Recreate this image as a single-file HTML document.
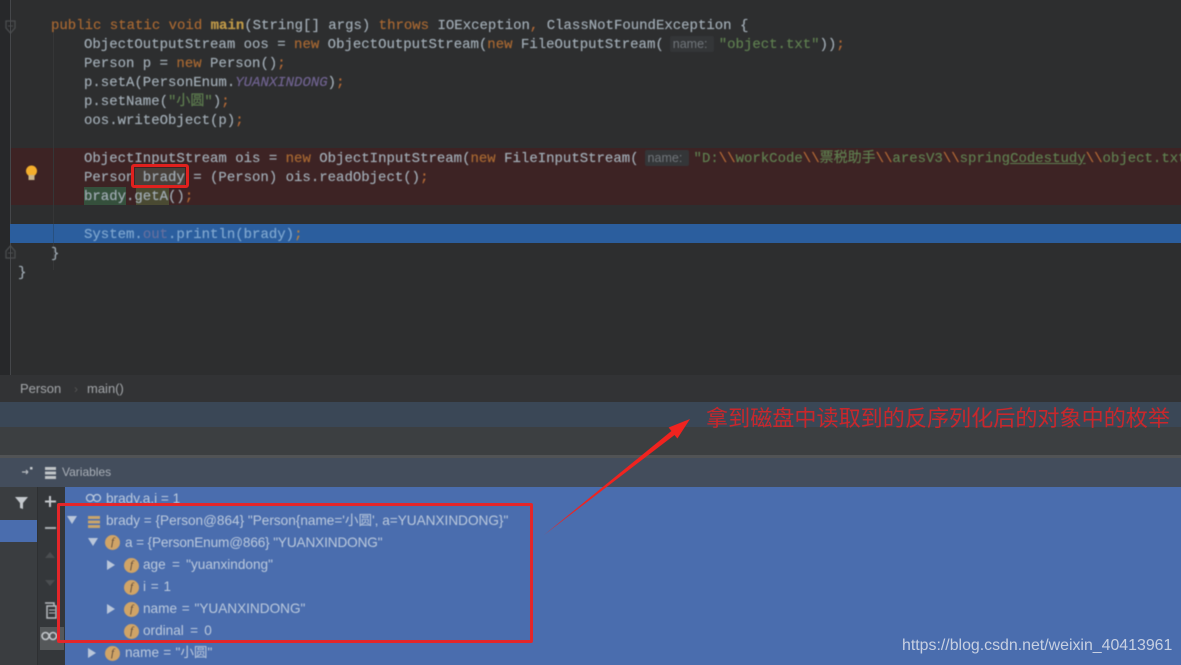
<!DOCTYPE html>
<html><head><meta charset="utf-8">
<style>
html,body{margin:0;padding:0;background:#2d2e2f}
#r{position:relative;width:1181px;height:665px;overflow:hidden;background:#2d2e2f}
.b{position:absolute}
.c{position:absolute;left:0;white-space:pre;font:14px/19px "Liberation Mono","Noto Sans CJK SC",monospace;color:#a0abb4;filter:blur(.6px);-webkit-text-stroke:.2px}
.k{color:#a86832}.s{color:#5f7f50}.y{color:#b46a37}.h{color:#6f628f}
.n{display:inline-block;width:44px;margin:0 5px 0 6px;box-sizing:border-box;color:#70757a;background:#343638;font:12.500px/16px "Liberation Sans",sans-serif;padding:0 3px;border-radius:2px;-webkit-text-stroke:0}
.t{position:absolute;white-space:pre;font:13.600px/20px "Liberation Sans","Noto Sans CJK SC",sans-serif;color:#bccadd;filter:blur(.55px)}
.f{position:absolute;width:15px;height:15px;border-radius:50%;background:#d0a467;color:#59483a;font:italic 11px/15px "Liberation Serif",serif;text-align:center;filter:blur(.4px)}
</style></head><body><div id="r">
<div class="b" style="left:0;top:0;width:10px;height:375px;background:#27282a"></div>
<div class="b" style="left:10px;top:0;width:1px;height:375px;background:#45474a"></div>
<div class="b" style="left:11px;top:148px;width:1170px;height:57px;background:#3d2324"></div>
<div class="b" style="left:10px;top:224px;width:1171px;height:19px;background:#2b5e9e"></div>
<div class="b" style="left:53px;top:30px;width:1px;height:240px;background:#353637"></div>
<div class="b" style="left:53px;top:224px;width:1px;height:19px;background:#28507f"></div>
<div class="b" style="left:84px;top:187px;width:42px;height:18px;background:#35503c"></div>
<div class="b" style="left:136px;top:187px;width:33px;height:18px;background:#4a4a32"></div>
<div class="b" style="left:135px;top:168px;width:50px;height:18px;background:#47403a"></div>

<div class="c" style="top:17px"><span style="padding-left:51px"></span><span class="k">public static void </span><b style="color:#c09a48;font-weight:bold">main</b>(String[] args) <span class="k">throws</span> IOException<span class="y">,</span> ClassNotFoundException {</div>
<div class="c" style="top:36px"><span style="padding-left:84px"></span>ObjectOutputStream oos = <span class="k">new</span> ObjectOutputStream(<span class="k">new</span> FileOutputStream(<span class="n">name:</span><span class="s">"object.txt"</span>))<span class="y">;</span></div>
<div class="c" style="top:55px"><span style="padding-left:84px"></span>Person p = <span class="k">new</span> Person()<span class="y">;</span></div>
<div class="c" style="top:74px"><span style="padding-left:84px"></span>p.setA(PersonEnum.<i class="h">YUANXINDONG</i>)<span class="y">;</span></div>
<div class="c" style="top:93px"><span style="padding-left:84px"></span>p.setName(<span class="s">"小圆"</span>)<span class="y">;</span></div>
<div class="c" style="top:112px"><span style="padding-left:84px"></span>oos.writeObject(p)<span class="y">;</span></div>
<div class="c" style="top:150px"><span style="padding-left:84px"></span>ObjectInputStream ois = <span class="k">new</span> ObjectInputStream(<span class="k">new</span> FileInputStream(<span class="n">name:</span><span class="s">"D:<span class="y">\\</span>workCode<span class="y">\\</span>票税助手<span class="y">\\</span>aresV3<span class="y">\\</span>spring<span style="text-decoration:underline">Codestudy</span><span class="y">\\</span>object.txt"</span></div>
<div class="c" style="top:169px"><span style="padding-left:84px"></span>Person brady = (Person) ois.readObject()<span class="y">;</span></div>
<div class="c" style="top:188px"><span style="padding-left:84px"></span>brady.getA()<span class="y">;</span></div>
<div class="c" style="top:226px;color:#7ea6cf"><span style="padding-left:84px"></span>System.<span style="color:#65709f">out</span>.println(brady)<span style="color:#b9803f">;</span></div>
<div class="c" style="top:245px"><span style="padding-left:51px"></span>}</div>
<div class="c" style="top:264px"><span style="padding-left:18px"></span>}</div>

<svg class="b" style="left:0;top:0;filter:blur(.5px)" width="60" height="270">
<path d="M6 21h9v7l-4.500 5-4.500-5z" fill="none" stroke="#4b4d4f" stroke-width="1.300"/><path d="M8 26h5" stroke="#4b4d4f"/>
<path d="M6 258h9v-7l-4.500-5-4.500 5z" fill="none" stroke="#4b4d4f" stroke-width="1.300"/><path d="M8 253h5" stroke="#4b4d4f"/>
<circle cx="31.500" cy="171" r="5.500" fill="#f4ae2c"/><rect x="28.500" y="175" width="6" height="5" fill="#c9b48a"/>
</svg>
<div class="b" style="left:131px;top:164px;width:52px;height:18px;border:3px solid #e0211e;border-radius:3px"></div>

<div class="b" style="left:0;top:375px;width:1181px;height:27px;background:#323335"></div>
<div class="b" style="left:20px;top:379px;font:13px/20px 'Liberation Sans',sans-serif;color:#a4a7aa;white-space:pre;filter:blur(.5px)">Person</div>
<div class="b" style="left:74px;top:379px;font:12px/20px 'Liberation Sans',sans-serif;color:#555;filter:blur(.4px)">›</div>
<div class="b" style="left:87px;top:379px;font:13px/20px 'Liberation Sans',sans-serif;color:#a4a7aa;filter:blur(.5px)">main()</div>
<div class="b" style="left:0;top:402px;width:1181px;height:25px;background:#3a4756"></div>
<div class="b" style="left:0;top:427px;width:1181px;height:28px;background:#3c3f41"></div>
<div class="b" style="left:0;top:455px;width:1181px;height:3px;background:#515355"></div>
<div class="b" style="left:0;top:458px;width:1181px;height:29px;background:#434d5c"></div>
<div class="b" style="left:0;top:487px;width:37px;height:178px;background:#3a3d40"></div>
<div class="b" style="left:38px;top:487px;width:27px;height:178px;background:#34373a"></div>
<div class="b" style="left:0;top:520px;width:37px;height:22px;background:#4a6dae"></div>
<div class="b" style="left:37px;top:487px;width:1px;height:178px;background:#2e3032"></div>
<div class="b" style="left:65px;top:487px;width:1116px;height:178px;background:#4a6dae"></div>
<div class="b" style="left:40px;top:627px;width:24px;height:23px;background:#55585a"></div>

<div class="b" style="left:62px;top:462px;font:12px/20px 'Liberation Sans',sans-serif;color:#aab0b8;filter:blur(.5px)">Variables</div>
<svg class="b" style="left:0;top:458px;filter:blur(.5px)" width="66" height="200">
<path d="M22 14h6M28 14l-2-2M28 14l-2 2" stroke="#b9bdc2" stroke-width="1.200" fill="none"/><rect x="30" y="9" width="2.500" height="2.500" fill="#c5c9cd"/>
<path d="M45 9h11v3H45zM45 13.500h11v3H45zM45 18h11v3H45z" fill="#c0c4c8"/>
<path d="M15 39h13l-5 6v6l-3-1v-5z" fill="#c5c9cd"/>
<path d="M50 38v11M45 43.500h11" stroke="#c5c9cd" stroke-width="2"/>
<path d="M45 70h11" stroke="#a9adb1" stroke-width="2"/>
<path d="M45 100l5-6 5 6z" fill="#4a4d50"/><path d="M45 122l5 6 5-6z" fill="#4a4d50"/>
<path d="M45 145h9v3M47 148h9v12h-9z" fill="none" stroke="#b5b9bd" stroke-width="1.500"/>
<path d="M49 152h6M49 155h6" stroke="#b5b9bd"/>
<circle cx="45.500" cy="178" r="3.500" fill="none" stroke="#c5c9cd" stroke-width="1.600"/><circle cx="53" cy="178" r="3.500" fill="none" stroke="#c5c9cd" stroke-width="1.600"/>
</svg>

<svg class="b" style="left:0;top:487px;filter:blur(.5px)" width="220" height="178">
<path d="M67 29h10l-5 8z" fill="#b9c6da"/><path d="M88 51h10l-5 8z" fill="#b9c6da"/>
<path d="M107 73v10l8-5z" fill="#b9c6da"/><path d="M107 117v10l8-5z" fill="#b9c6da"/><path d="M88 161v10l8-5z" fill="#b9c6da"/>
<path d="M88 29h12v3H88zM88 33.500h12v3H88zM88 38h12v3H88z" fill="#c9a56c"/>
<circle cx="90" cy="11" r="3.500" fill="none" stroke="#bccadd" stroke-width="1.300"/><circle cx="97" cy="11" r="3.500" fill="none" stroke="#bccadd" stroke-width="1.300"/>
</svg>
<div class="t" style="left:106px;top:489px;height:14px;overflow:hidden">brady.a.i = 1</div>
<div class="t" style="left:106px;top:511px">brady = {Person@864} "Person{name='小圆', a=YUANXINDONG}"</div>
<div class="f" style="left:105px;top:535px">f</div>
<div class="t" style="left:125px;top:533px;letter-spacing:-.13px">a = {PersonEnum@866} "YUANXINDONG"</div>
<div class="f" style="left:124px;top:558px">f</div>
<div class="t" style="left:143px;top:555px;word-spacing:2.500px">age = "yuanxindong"</div>
<div class="f" style="left:124px;top:580px">f</div>
<div class="t" style="left:143px;top:577px;word-spacing:1px">i = 1</div>
<div class="f" style="left:124px;top:602px">f</div>
<div class="t" style="left:143px;top:599px;word-spacing:1px">name = "YUANXINDONG"</div>
<div class="f" style="left:124px;top:624px">f</div>
<div class="t" style="left:143px;top:621px;word-spacing:2.500px">ordinal = 0</div>
<div class="f" style="left:105px;top:646px">f</div>
<div class="t" style="left:125px;top:643px;word-spacing:.5px">name = "小圆"</div>

<div class="b" style="left:57px;top:503px;width:470px;height:134px;border:3px solid #e3262a;border-radius:2px"></div>
<svg class="b" style="left:0;top:0" width="1181" height="665">
<path d="M544 535L671.400 431L668.600 427.500L690 419L677.400 438.500L674.500 435Z" fill="#f0231f"/>
</svg>
<div class="b" style="left:706px;top:404px;white-space:nowrap;font:22.100px/30px 'Liberation Sans','Noto Sans CJK SC',sans-serif;color:#c9272b;filter:blur(.35px)">拿到磁盘中读取到的反序列化后的对象中的枚举</div>
<div class="b" style="left:902px;top:636px;white-space:nowrap;font:15.900px/20px 'Liberation Sans',sans-serif;color:#c7d0e2;filter:blur(.3px)">https://blog.csdn.net/weixin_40413961</div>
</div></body></html>
